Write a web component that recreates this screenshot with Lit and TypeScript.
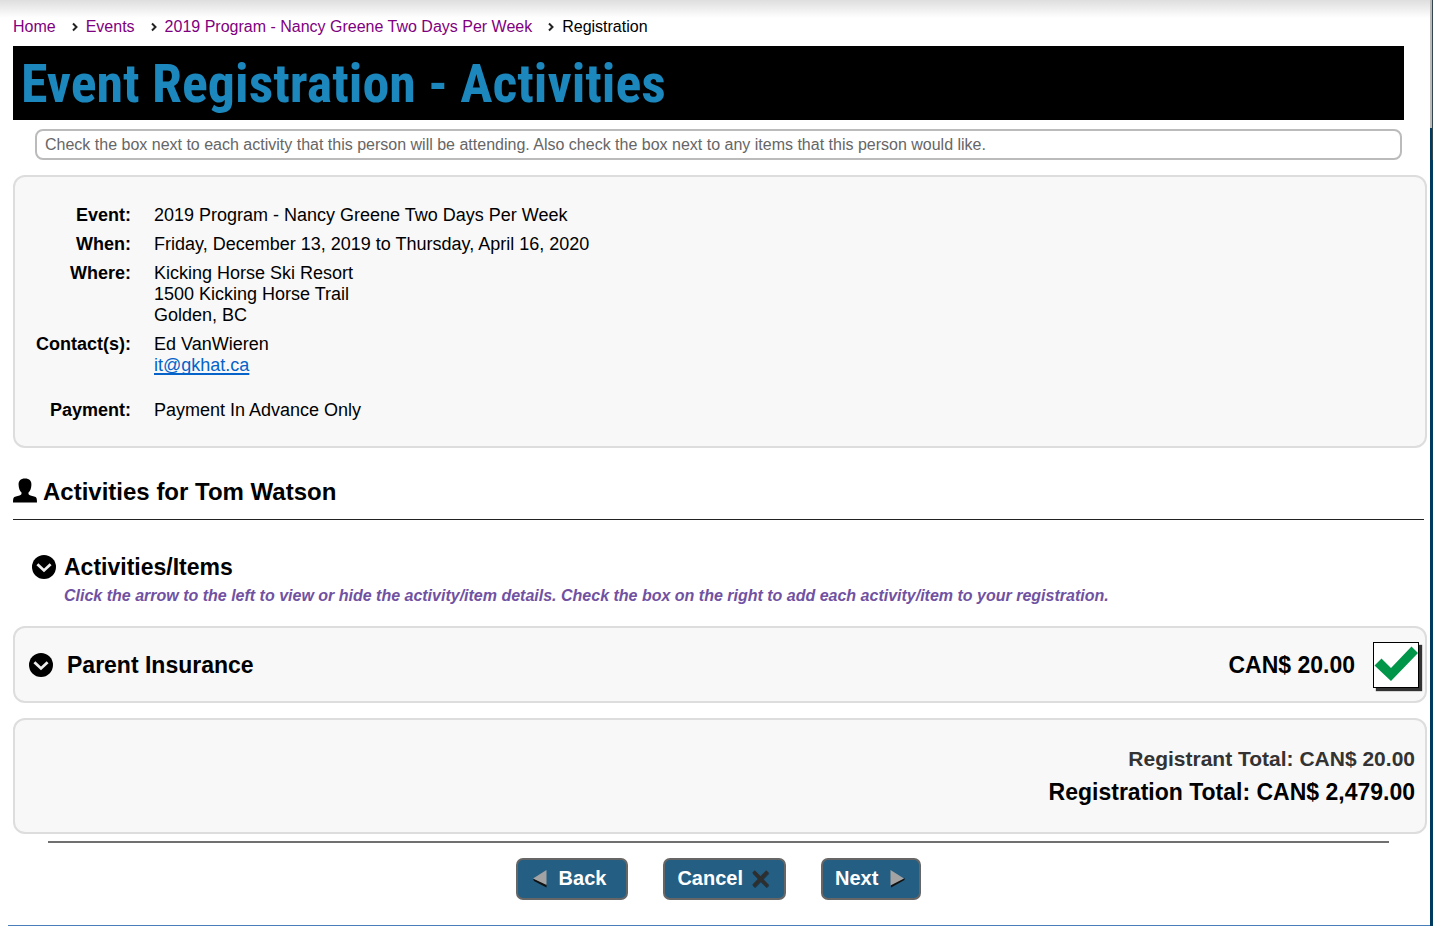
import { LitElement, html, css, svg, nothing } from "lit";
import { customElement, state } from "lit/decorators.js";

const chevronDisc = svg`<circle cx="12" cy="12" r="12" fill="#000"/><path d="M5.400 9.200 12 15.400l6.600-6.200" fill="none" stroke="#eee" stroke-width="2.8"/>`;

@customElement("app-root")
export class AppRoot extends LitElement {
  @state() private open = true;
  @state() private chosen = true;

  static styles = css`
    :host {
      display: block;
      font-family: "Liberation Sans", Arial, sans-serif;
      font-size: 18px;
      line-height: 21px;
      color: #000;
    }
    * { box-sizing: border-box; }
    .page {
      display: grid;
      grid-template-columns: minmax(0, 1fr) 3px;
      min-height: 100vh;
      background: #fff;
    }
    .edge { background: linear-gradient(to right, transparent 2px, #33454f 2px) 0 0 / 100% 160px no-repeat, linear-gradient(#bbb, #bbb) 0 0 / 100% 128px no-repeat, #003b5f; }
    .body {
      display: flex;
      flex-direction: column;
      padding: 16px 3px 0 13px;
      background: linear-gradient(#dedede, #fff 18px);
    }
    .crumbs {
      display: flex;
      align-items: center;
      list-style: none;
      margin: 0;
      padding: 0;
      font-size: 16px;
    }
    .crumbs li { display: flex; align-items: center; }
    .crumbs a { color: #800080; text-decoration: none; }
    .crumbs svg { width: 6px; height: 10px; margin: 0 8px 0 16px; }
    .title {
      margin: 9px 23px 0 0;
      padding: 2px 8px 0;
      background: #000;
      color: #1c87bd;
      font: bold 54px/72px "Roboto Condensed", Roboto, sans-serif;
    }
    .hint {
      margin: 9px 25px 0 22px;
      padding: 3px 8px;
      border: 2px solid #bbb;
      border-radius: 8px;
      color: #666;
      font-size: 16px;
    }
    .panel {
      border: 2px solid #ddd;
      border-radius: 12px;
      background: #f8f8f8;
    }
    .info {
      display: grid;
      grid-template-columns: 116px 1fr;
      column-gap: 23px;
      row-gap: 8px;
      margin: 15px 0 0;
      padding: 28px 0 25px;
    }
    .info dt { font-weight: bold; text-align: right; }
    .info dd { margin: 0; }
    .info .contact { padding-bottom: 16px; }
    .info a {
      color: #0563c9;
      text-decoration-thickness: 2px;
      text-underline-offset: 2px;
      text-decoration-skip-ink: none;
    }
    h2, h3, h4, p { margin: 0; }
    .person {
      display: flex;
      align-items: center;
      gap: 6px;
      margin: 29px 3px 0 0;
      padding-bottom: 13px;
      border-bottom: 1px solid #222;
      font-size: 24px;
      line-height: 29px;
    }
    .icon { display: block; width: 24px; height: 24px; }
    .person .icon { height: 28px; }
    .toggle { padding: 0; border: 0; background: none; cursor: pointer; }
    .group {
      display: grid;
      grid-template-columns: 24px 1fr;
      column-gap: 8px;
      align-items: center;
      margin: 33px 0 0;
      padding-left: 19px;
    }
    .group h3, .item h4 { font-size: 23px; line-height: 28px; }
    .note {
      grid-column: 2;
      margin-top: 4px;
      color: #7151a1;
      font-size: 16px;
      font-style: italic;
      font-weight: bold;
    }
    .item {
      display: flex;
      align-items: center;
      margin-top: 20px;
      padding: 14px 6px 13px 14px;
    }
    .item .toggle { margin-right: 14px; }
    .item h4 { flex: 1; }
    .price { margin-right: 18px; font-size: 23px; line-height: 28px; font-weight: bold; }
    .tick { display: grid; width: 46px; height: 46px; cursor: pointer; }
    .tick input {
      grid-area: 1 / 1;
      appearance: none;
      width: 46px;
      height: 46px;
      margin: 0;
      border: 1px solid #000;
      background: #fff;
      box-shadow: 3px 3px 1px #333;
    }
    .tick svg { grid-area: 1 / 1; width: 46px; height: 46px; z-index: 1; pointer-events: none; }
    .totals {
      margin-top: 15px;
      padding: 24px 10px 22px;
      text-align: right;
      font-weight: bold;
    }
    .sub { color: #333; font-size: 21px; line-height: 30px; }
    .grand { font-size: 23px; line-height: 36px; }
    .rule { margin: 7px 38px 0 35px; border: 0; border-top: 2px solid #707070; }
    .actions {
      display: flex;
      justify-content: center;
      gap: 35px;
      margin: 15px 3px 25px 0;
    }
    .btn {
      display: flex;
      align-items: center;
      height: 42px;
      padding: 0 12px 2px;
      border: 2px solid #666;
      border-radius: 7px;
      background: #245e82;
      color: #fff;
      font: bold 20px/24px "Liberation Sans", Arial, sans-serif;
      cursor: pointer;
    }
    .btn svg { width: 20px; height: 20px; }
    .back { padding-right: 20px; gap: 9px; }
    .cancel { padding-right: 14px; gap: 7px; }
    .next { gap: 9px; }
    .foot { margin: 0 -3px 0 -5px; border: 0; border-top: 1px solid #4a7ebb; }
  `;

  private toggle() {
    this.open = !this.open;
  }

  render() {
    const arrow = html`<svg viewBox="0 0 6 10" aria-hidden="true"><path d="M1 1.500 4.500 5 1 8.500" fill="none" stroke="#222" stroke-width="2"/></svg>`;
    return html`
      <div class="page">
        <main class="body">
          <nav aria-label="Breadcrumb">
            <ol class="crumbs">
              <li><a href="#">Home</a></li>
              <li>${arrow}<a href="#">Events</a></li>
              <li>${arrow}<a href="#">2019 Program - Nancy Greene Two Days Per Week</a></li>
              <li>${arrow}Registration</li>
            </ol>
          </nav>
          <h1 class="title">Event Registration - Activities</h1>
          <p class="hint">Check the box next to each activity that this person will be attending. Also check the box next to any items that this person would like.</p>

          <dl class="panel info">
            <dt>Event:</dt><dd>2019 Program - Nancy Greene Two Days Per Week</dd>
            <dt>When:</dt><dd>Friday, December 13, 2019 to Thursday, April 16, 2020</dd>
            <dt>Where:</dt><dd>Kicking Horse Ski Resort<br>1500 Kicking Horse Trail<br>Golden, BC</dd>
            <dt>Contact(s):</dt><dd class="contact">Ed VanWieren<br><a href="mailto:it@gkhat.ca">it@gkhat.ca</a></dd>
            <dt>Payment:</dt><dd>Payment In Advance Only</dd>
          </dl>

          <h2 class="person">
            <svg class="icon" viewBox="0 0 24 28" aria-hidden="true"><path d="M12 .5c4.600 0 6.600 2.500 6.400 6.500-.1 3.400-1.200 5.800-2.900 7.600-.3 1.500.4 2.500 2 3l4.500 1.200c1.500.5 2 1.900 2 5.700H0c0-3.800.5-5.200 2-5.700l4.500-1.200c1.600-.5 2.300-1.500 2-3C6.800 12.800 5.700 10.400 5.600 7 5.400 3 7.400.5 12 .5z"/></svg>
            Activities for Tom Watson
          </h2>

          <section class="group">
            <button class="toggle" aria-label="Show or hide activities" @click=${this.toggle}><svg class="icon" viewBox="0 0 24 24">${chevronDisc}</svg></button>
            <h3>Activities/Items</h3>
            <p class="note">Click the arrow to the left to view or hide the activity/item details. Check the box on the right to add each activity/item to your registration.</p>
          </section>

          ${this.open ? html`
            <section class="panel item">
              <button class="toggle" aria-label="Show or hide details"><svg class="icon" viewBox="0 0 24 24">${chevronDisc}</svg></button>
              <h4>Parent Insurance</h4>
              <span class="price">CAN$ 20.00</span>
              <label class="tick">
                <input type="checkbox" aria-label="Parent Insurance" .checked=${this.chosen}
                  @change=${(e: Event) => (this.chosen = (e.target as HTMLInputElement).checked)}>
                ${this.chosen ? html`<svg viewBox="0 0 46 46" aria-hidden="true"><path d="M1.500 23.500 8.500 16.500 18 26 38.500 4.500 45 11 18 39z" fill="#00964a"/></svg>` : nothing}
              </label>
            </section>` : nothing}

          <section class="panel totals">
            <p class="sub">Registrant Total: CAN$ 20.00</p>
            <p class="grand">Registration Total: CAN$ 2,479.00</p>
          </section>

          <hr class="rule">
          <div class="actions">
            <button class="btn back"><svg viewBox="0 0 20 20" aria-hidden="true"><path d="M3 10.500 4 13l12.500 6.500V16z" fill="#111"/><path d="M16.500 2v15L3 10.500z" fill="#a3a3a3"/></svg>Back</button>
            <button class="btn cancel">Cancel<svg viewBox="0 0 20 20" aria-hidden="true"><path d="M4 4.500 18 19M18 4.500 4 19" stroke="#1c3a4c" stroke-width="3.500"/><path d="M3.500 3.500 17.500 18M17.500 3.500 3.500 18" stroke="#2e2e2e" stroke-width="3.500"/></svg></button>
            <button class="btn next">Next<svg viewBox="0 0 20 20" aria-hidden="true"><path d="M4 16v3.500L17.500 12V10z" fill="#111"/><path d="M3.500 2v15.500L17 10.500z" fill="#a3a3a3"/></svg></button>
          </div>
          <hr class="foot">
        </main>
        <div class="edge"></div>
      </div>
    `;
  }
}
